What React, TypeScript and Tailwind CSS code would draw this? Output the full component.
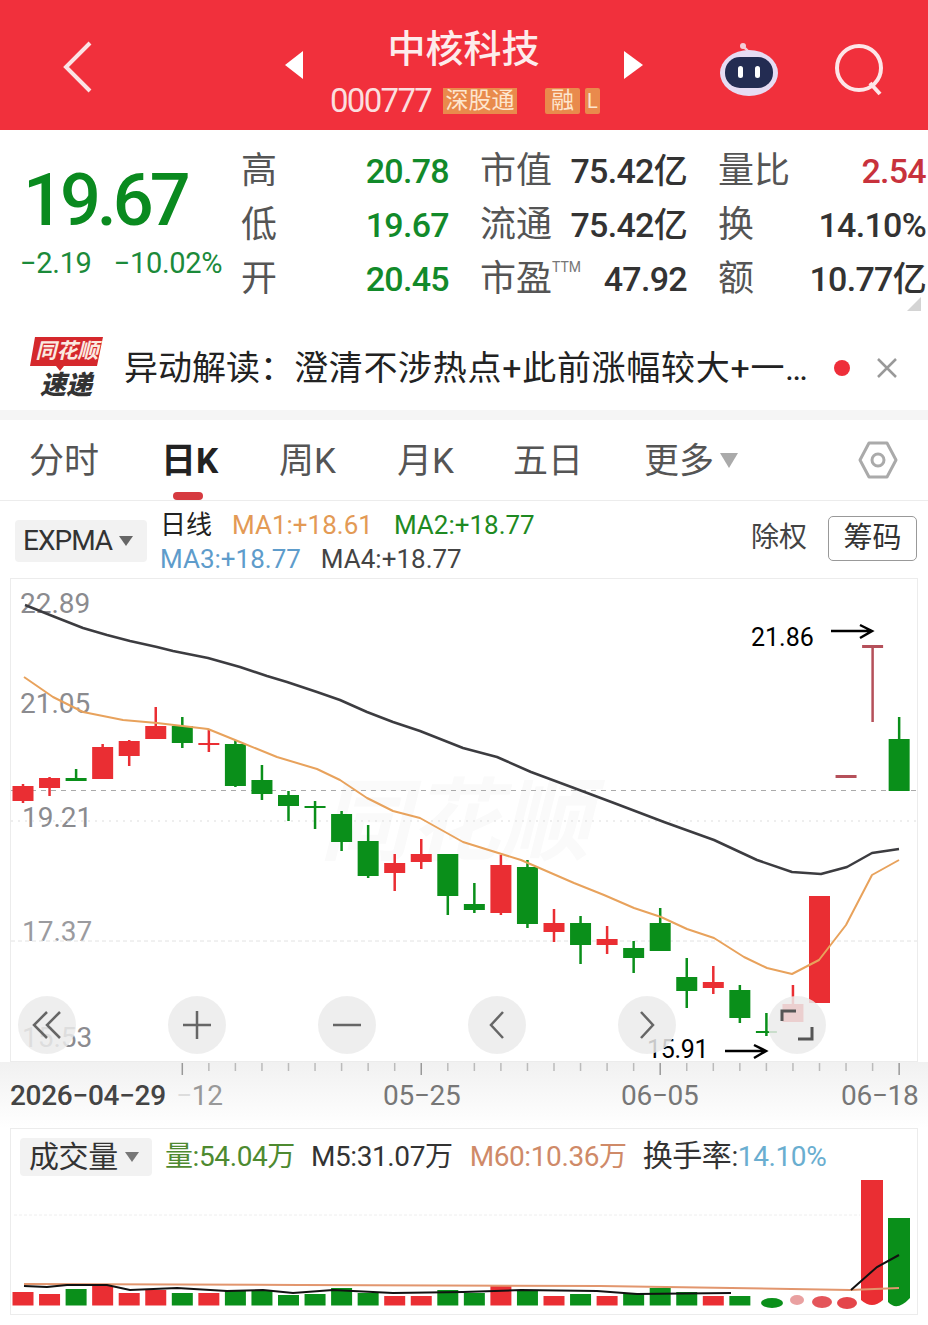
const RED = "#EA2E33";
const GREEN = "#0A8F1A";
const MUTED = "#B5505A";
const stepX = (i: number) => 23 + 26.55 * i;

// color, body top, body bottom, wick top, wick bottom
const candles: [string, number, number, number, number][] = [
  [RED, 786, 801, 784, 803],
  [RED, 778, 788, 777, 796],
  [GREEN, 778, 781, 769, 781],
  [RED, 747, 779, 744, 779],
  [RED, 741, 756, 740, 766],
  [RED, 726, 739, 707, 739],
  [GREEN, 726, 743, 717, 748],
  [RED, 743, 745, 730, 752],
  [GREEN, 744, 786, 740, 787],
  [GREEN, 780, 794, 765, 800],
  [GREEN, 795, 806, 791, 821],
  [GREEN, 806, 808, 801, 829],
  [GREEN, 814, 842, 811, 851],
  [GREEN, 841, 876, 825, 878],
  [RED, 863, 873, 854, 891],
  [RED, 854, 862, 839, 869],
  [GREEN, 854, 896, 854, 915],
  [GREEN, 904, 910, 883, 913],
  [RED, 865, 913, 855, 915],
  [GREEN, 867, 924, 860, 928],
  [RED, 923, 932, 909, 942],
  [GREEN, 923, 945, 916, 964],
  [RED, 939, 945, 926, 954],
  [GREEN, 948, 958, 941, 973],
  [GREEN, 923, 951, 908, 951],
  [GREEN, 977, 991, 958, 1008],
  [RED, 982, 988, 966, 994],
  [GREEN, 990, 1018, 985, 1023],
  [GREEN, 1031, 1033, 1013, 1036],
  [RED, 1004, 1022, 985, 1022],
  [RED, 896, 1003, 896, 1003],
  [MUTED, 775, 778, 775, 778],
  [MUTED, 645, 648, 645, 722],
  [GREEN, 739, 791, 717, 791],
];

const volumes: [string, number][] = [
  [RED, 1292], [RED, 1294], [GREEN, 1289], [RED, 1286], [RED, 1293], [RED, 1290], [GREEN, 1293],
  [RED, 1293], [GREEN, 1291], [GREEN, 1291], [GREEN, 1295], [GREEN, 1294], [GREEN, 1288], [GREEN, 1293],
  [RED, 1296], [RED, 1296], [GREEN, 1290], [GREEN, 1293], [RED, 1285], [GREEN, 1290], [RED, 1296],
  [GREEN, 1294], [RED, 1296], [GREEN, 1294], [GREEN, 1288], [GREEN, 1292], [RED, 1296], [GREEN, 1296],
];

const blackLine = "25,605 55,617 83,628 107,635 130,641 157,647 173,651 208,658 240,667 267,676 287,682 317,692 340,700 367,712 393,722 420,731 463,748 497,757 531,772 574,788 614,803 664,822 714,840 757,860 792,872 821,874 847,867 872,853 899,849";
const orangeLine = "24,677 53,697 83,712 123,720 157,723 208,729 240,742 277,757 317,769 340,780 367,798 393,811 420,818 463,842 521,860 574,883 604,895 634,908 661,917 687,929 714,938 744,957 767,968 792,974 819,960 846,925 872,875 899,860";
const volBlack = "24,1286 47,1287 67,1285 107,1285 130,1290 177,1288 227,1291 263,1290 293,1293 333,1290 393,1293 463,1292 521,1290 597,1291 637,1294 731,1293";
const volBlackEnd = "851,1290 877,1267 899,1255";

const quote = [
  { label: "高", value: "20.78", cls: "text-[#128a2a]" },
  { label: "市值", value: "75.42亿", cls: "text-[#333]" },
  { label: "量比", value: "2.54", cls: "text-[#c8323c]" },
  { label: "低", value: "19.67", cls: "text-[#128a2a]" },
  { label: "流通", value: "75.42亿", cls: "text-[#333]" },
  { label: "换", value: "14.10%", cls: "text-[#333]" },
  { label: "开", value: "20.45", cls: "text-[#128a2a]" },
  { label: "市盈", sup: "TTM", value: "47.92", cls: "text-[#333]" },
  { label: "额", value: "10.77亿", cls: "text-[#333]" },
];

function Robot() {
  return (
    <svg width="60" height="56" viewBox="0 0 60 56">
      <path d="M30 13 C29 8 26 7 24 6" fill="none" stroke="#f3cdd8" strokeWidth="2.5" />
      <circle cx="24" cy="5" r="3" fill="#f3cdd8" />
      <ellipse cx="30" cy="32" rx="29" ry="23" fill="#e6dcf3" />
      <rect x="6" y="16" width="48" height="31" rx="15" fill="#232c52" />
      <rect x="19" y="25" width="5" height="12" rx="2.5" fill="#fff" />
      <rect x="36" y="25" width="5" height="12" rx="2.5" fill="#fff" />
    </svg>
  );
}

function ChartSvg() {
  return (
    <svg className="absolute inset-0" width="928" height="484" viewBox="0 578 928 484">
      <line x1="11" x2="917" y1="790.5" y2="790.5" stroke="#aaa" strokeDasharray="5 5" />
      <line x1="11" x2="917" y1="821" y2="821" stroke="#ddd" strokeDasharray="2 5" />
      <line x1="11" x2="917" y1="941" y2="941" stroke="#e2e2e2" strokeDasharray="4 3" />
      {candles.map(([color, top, bottom, wickTop, wickBottom], i) => (
        <g key={i} fill={color}>
          <rect x={stepX(i) - 1.25} y={wickTop} width="2.5" height={wickBottom - wickTop} />
          <rect x={stepX(i) - 10.5} y={top} width="21" height={bottom - top} />
        </g>
      ))}
      <polyline points={blackLine} fill="none" stroke="#3c3c40" strokeWidth="2.5" strokeLinejoin="round" />
      <polyline points={orangeLine} fill="none" stroke="#e8a25c" strokeWidth="2" strokeLinejoin="round" />
      {/* hand drawn arrows */}
      <g fill="none" stroke="#000" strokeWidth="2.5">
        <path d="M831 631 H872 M860 625 L872 631 L860 638" />
        <path d="M725 1051 H766 M754 1045 L766 1051 L754 1058" />
      </g>
    </svg>
  );
}

function VolumeSvg() {
  return (
    <svg className="absolute inset-0" width="928" height="187" viewBox="0 1128 928 187">
      <line x1="14" x2="860" y1="1215" y2="1215" stroke="#eee" strokeDasharray="3 2" />
      {volumes.map(([color, top], i) => (
        <rect key={i} x={stepX(i) - 10.5} y={top} width="21" height={1305.5 - top} fill={color} />
      ))}
      <ellipse cx="772" cy="1303" rx="11" ry="5" fill={GREEN} />
      <ellipse cx="797" cy="1300" rx="7" ry="5" fill="#e9a0a0" />
      <ellipse cx="822" cy="1302" rx="10" ry="6" fill="#e4555a" />
      <ellipse cx="847" cy="1303" rx="10" ry="6" fill="#e4454a" />
      <path d="M861 1180 H883 V1300 Q872 1310 861 1300 Z" fill={RED} />
      <path d="M888 1218 H910 V1298 Q897 1312 888 1302 Z" fill={GREEN} />
      <polyline points="24,1284 300,1285 600,1286 850,1290 899,1288" fill="none" stroke="#e2966e" strokeWidth="2" />
      <polyline points={volBlack} fill="none" stroke="#111" strokeWidth="2" />
      <polyline points={volBlackEnd} fill="none" stroke="#111" strokeWidth="2" />
    </svg>
  );
}

export default function App() {
  return (
    <div className="w-[928px] h-[1325px] overflow-hidden bg-white font-['Roboto','Noto_Sans_CJK_SC',sans-serif]">
      {/* Header */}
      <header className="h-[130px] bg-[#F1303C] flex items-center text-white">
        <svg className="ml-[62px] mt-[4px]" width="32" height="54" viewBox="0 0 32 54">
          <path d="M28 3 L4 27 L28 51" fill="none" stroke="#fbe3e5" strokeWidth="4" />
        </svg>
        <div className="ml-[191px] w-0 h-0 border-y-[14px] border-y-transparent border-r-[18px] border-r-white" />
        <div className="w-[321px] h-full flex flex-col pt-[26px]">
          <div className="text-center text-[38px] leading-[46px] font-medium text-[#fdecec]">中核科技</div>
          <div className="flex items-center pl-[27px] mt-[14px]">
            <span className="w-[102px] text-[33px] leading-[30px] tracking-[-1.7px] text-[#fbdede]">000777</span>
            <span className="ml-[11px] w-[74px] h-[26px] bg-[#E98A4C] text-[#fde6cf] text-[23px] leading-[26px] text-center">深股通</span>
            <span className="ml-[28px] w-[35px] h-[26px] bg-[#E98A4C] text-[#fde6cf] text-[23px] leading-[26px] text-center rounded-[2px]">融</span>
            <span className="ml-[5px] w-[15px] h-[26px] bg-[#E98A4C] text-[#fde6cf] text-[20px] leading-[26px] text-center rounded-[2px]">L</span>
          </div>
        </div>
        <div className="w-0 h-0 border-y-[14px] border-y-transparent border-l-[19px] border-l-white" />
        <div className="ml-[76px] mt-[8px]"><Robot /></div>
        <svg className="ml-[55px] mt-[10px]" width="52" height="52" viewBox="0 0 52 52">
          <circle cx="25" cy="24" r="22" fill="none" stroke="#fde6e8" strokeWidth="4" />
          <path d="M36 39 L46 50" fill="none" stroke="#fde6e8" strokeWidth="4" />
        </svg>
      </header>

      {/* Quote */}
      <section className="relative h-[200px] flex">
        <div className="w-[241px] pl-[22px] pt-[31px]">
          <div className="pl-[1px] text-[72px] leading-[80px] font-medium tracking-[-4px] text-[#0A8A1F]">19.67</div>
          <div className="flex gap-[22px] ml-[-2px] text-[29px] leading-[34px] tracking-[-0.3px] text-[#1b8a3a] mt-[5px]">
            <span>−2.19</span>
            <span>−10.02%</span>
          </div>
        </div>
        <div className="grid grid-cols-[208px_207px_208px] gap-x-[31px] auto-rows-[54px] pt-[14px]">
          {quote.map((q) => (
            <div key={q.label} className="flex items-center justify-between">
              <span className="text-[36px] leading-[48px] text-[#555] flex items-start">
                {q.label}
                {q.sup && <span className="text-[14px] leading-[24px] text-[#777]">{q.sup}</span>}
              </span>
              <span className={`text-[34px] font-medium tracking-[-0.7px] whitespace-nowrap ${q.cls}`}>{q.value}</span>
            </div>
          ))}
        </div>
        <div className="absolute right-[7px] top-[167px] w-0 h-0 border-l-[14px] border-l-transparent border-b-[14px] border-b-[#d4d4d4]" />
      </section>

      {/* News banner */}
      <section className="h-[80px] flex items-center pb-[4px]">
        <svg className="ml-[30px]" width="74" height="64" viewBox="0 0 74 64">
          <path d="M5 1 H73 L67 30 H34 L30 35 L26 30 H0 Z" fill="#D5282C" />
          <text x="37" y="22" textAnchor="middle" fontSize="21" fontWeight="700" fontStyle="italic" fill="#fbe9e0">同花顺</text>
          <text x="36" y="58" textAnchor="middle" fontSize="26" fontWeight="900" fontStyle="italic" fill="#333">速递</text>
        </svg>
        <div className="ml-[20px] w-[686px] text-[34px] text-[#222] whitespace-nowrap overflow-hidden">异动解读：<span className="tracking-[0.7px]">澄清不涉热点+此前涨幅较大+一…</span></div>
        <div className="ml-[24px] w-[16px] h-[16px] rounded-full bg-[#EE2E3A]" />
        <svg className="ml-[26px]" width="22" height="22" viewBox="0 0 22 22">
          <path d="M2 2 L20 20 M20 2 L2 20" fill="none" stroke="#999" strokeWidth="2.5" />
        </svg>
      </section>
      <div className="h-[10px] bg-[#f5f5f5]" />

      {/* Period tabs */}
      <nav className="h-[81px] border-b border-[#ececec] flex items-center pl-[29px] relative text-[35px] text-[#555] whitespace-nowrap">
        <span className="w-[70px] mt-[5px]">分时</span>
        <span className="ml-[62px] w-[57px] mt-[5px] font-bold text-[#222]">日K</span>
        <span className="ml-[61px] w-[58px] mt-[5px]">周K</span>
        <span className="ml-[60px] w-[58px] mt-[5px]">月K</span>
        <span className="ml-[58px] w-[70px] mt-[5px]">五日</span>
        <span className="ml-[61px] w-[70px] mt-[5px]">更多</span>
        <div className="ml-[6px] w-0 h-0 border-x-[9px] border-x-transparent border-t-[15px] border-t-[#aaa]" />
        <svg className="ml-[120px]" width="40" height="40" viewBox="0 0 40 40">
          <path d="M11 3 H29 L38 20 L29 37 H11 L2 20 Z" fill="none" stroke="#aaa" strokeWidth="3" strokeLinejoin="round" />
          <circle cx="20" cy="20" r="6" fill="none" stroke="#aaa" strokeWidth="3" />
        </svg>
        <div className="absolute left-[173px] bottom-0 w-[30px] h-[8px] rounded-full bg-[#D63A40]" />
      </nav>

      {/* Indicator row */}
      <section className="h-[77px] flex items-center pl-[15px] pr-[11px]">
        <div className="w-[132px] h-[42px] bg-[#f2f2f2] rounded-[4px] flex items-center pl-[8px] mt-[2px]">
          <span className="text-[28px] tracking-[-1px] text-[#333]">EXPMA</span>
          <div className="ml-[7px] w-0 h-0 border-x-[7px] border-x-transparent border-t-[10px] border-t-[#666]" />
        </div>
        <div className="ml-[13px] w-[500px] text-[26px] leading-[34px] pt-[5px]">
          <div className="flex">
            <span className="text-[#222]">日线</span>
            <span className="ml-[20px] text-[#E39A55]">MA1:+18.61</span>
            <span className="ml-[21px] text-[#1E8A22]">MA2:+18.77</span>
          </div>
          <div className="flex">
            <span className="text-[#5E9CCB]">MA3:+18.77</span>
            <span className="ml-[20px] text-[#444]">MA4:+18.77</span>
          </div>
        </div>
        <span className="ml-auto text-[28px] text-[#444] mb-[3px]">除权</span>
        <div className="ml-[21px] w-[89px] h-[45px] border border-[#999] rounded-[5px] flex items-center justify-center text-[29px] leading-[40px] text-[#333] mb-[3px]">筹码</div>
      </section>

      {/* K-line chart */}
      <section className="relative h-[484px]">
        <div className="ml-[10px] w-[908px] h-full border-x border-y border-[#ececec]" />
        <div className="absolute left-[320px] top-[195px] text-[90px] leading-[100px] font-bold italic text-[#fafafa]">同花顺</div>
        <span className="absolute left-[20px] top-[8px] text-[28px] leading-[36px] text-[#8b8b8f]">22.89</span>
        <span className="absolute left-[20px] top-[108px] text-[28px] leading-[36px] text-[#8b8b8f]">21.05</span>
        <span className="absolute left-[22px] top-[222px] text-[28px] leading-[36px] text-[#8b8b8f]">19.21</span>
        <span className="absolute left-[22px] top-[336px] text-[28px] leading-[36px] text-[#9b9b9f]">17.37</span>
        <span className="absolute left-[22px] top-[442px] text-[28px] leading-[36px] text-[#8b8b8f]">15.53</span>
        <ChartSvg />
        <span className="absolute left-[751px] top-[45px] text-[25px] leading-[30px] text-black">21.86</span>
        <span className="absolute left-[647px] top-[457px] text-[25px] leading-[30px] tracking-[-0.3px] text-black">15.91</span>
        {/* zoom and pan buttons */}
        <div className="absolute left-[18px] top-[418px] flex gap-[92px]">
          <button className="w-[58px] h-[58px] rounded-full bg-[#ebebeb]/85 flex items-center justify-center">
            <svg width="30" height="30" viewBox="0 0 30 30"><path d="M15 2 L2 15 L15 28 M28 2 L15 15 L28 28" fill="none" stroke="#666" strokeWidth="2.5" /></svg>
          </button>
          <button className="w-[58px] h-[58px] rounded-full bg-[#ebebeb]/85 flex items-center justify-center">
            <svg width="30" height="30" viewBox="0 0 30 30"><path d="M1 15 H29 M15 1 V29" fill="none" stroke="#666" strokeWidth="2.5" /></svg>
          </button>
          <button className="w-[58px] h-[58px] rounded-full bg-[#ebebeb]/85 flex items-center justify-center">
            <svg width="30" height="6" viewBox="0 0 30 6"><path d="M1 3 H29" fill="none" stroke="#666" strokeWidth="2.5" /></svg>
          </button>
          <button className="w-[58px] h-[58px] rounded-full bg-[#ebebeb]/85 flex items-center justify-center">
            <svg width="18" height="30" viewBox="0 0 18 30"><path d="M15 2 L3 15 L15 28" fill="none" stroke="#666" strokeWidth="2.5" /></svg>
          </button>
          <button className="w-[58px] h-[58px] rounded-full bg-[#ebebeb]/85 flex items-center justify-center">
            <svg width="18" height="30" viewBox="0 0 18 30"><path d="M3 2 L15 15 L3 28" fill="none" stroke="#666" strokeWidth="2.5" /></svg>
          </button>
          <button className="w-[58px] h-[58px] rounded-full bg-[#ebebeb]/85 flex items-center justify-center">
            <svg width="34" height="32" viewBox="0 0 34 32"><path d="M2 12 V2 H16 M32 18 V30 H18" fill="none" stroke="#555" strokeWidth="3" /></svg>
          </button>
        </div>
      </section>

      {/* Date axis */}
      <section className="relative h-[66px] bg-linear-to-b from-[#f1f1f1] to-white">
        <svg className="absolute inset-0" width="928" height="16" viewBox="0 0 928 16">
          {Array.from({ length: 28 }, (_, i) => {
            const major = i % 9 === 0;
            const x = 182.3 + 26.55 * i;
            return <line key={i} x1={x} x2={x} y1="1" y2={major ? 13 : 9} stroke={major ? "#999" : "#bbb"} strokeWidth="1.5" />;
          })}
        </svg>
        <div className="flex pl-[10px] pt-[16px] text-[28px] leading-[36px] tracking-[-0.3px] text-[#777]">
          <span className="w-[155px] whitespace-nowrap font-medium text-[#444]">2026−04−29</span>
          <span className="ml-[11px] w-[207px] text-[#999]"><span className="text-[#ddd]">−</span>12</span>
          <span className="w-[238px]">05−25</span>
          <span className="w-[220px]">06−05</span>
          <span>06−18</span>
        </div>
      </section>

      {/* Volume */}
      <section className="relative h-[187px]">
        <div className="ml-[10px] w-[908px] h-full border-x border-y border-[#ececec]" />
        <VolumeSvg />
        <div className="absolute left-[20px] top-[9px] flex items-center text-[28px] leading-[38px] tracking-[-0.4px]">
          <div className="w-[132px] h-[38px] bg-[#f2f2f2] rounded-[4px] flex items-center pl-[9px]">
            <span className="text-[30px] text-[#333]">成交量</span>
            <div className="ml-[7px] w-0 h-0 border-x-[7px] border-x-transparent border-t-[10px] border-t-[#777]" />
          </div>
          <span className="ml-[13px] text-[#4E8A30]">量:54.04万</span>
          <span className="ml-[16px] text-[#333]">M5:31.07万</span>
          <span className="ml-[17px] text-[#CF8A68]">M60:10.36万</span>
          <span className="ml-[16px] text-[#333]"><span className="text-[30px]">换手率</span>:<span className="text-[#6AAED0]">14.10%</span></span>
        </div>
      </section>
    </div>
  );
}
